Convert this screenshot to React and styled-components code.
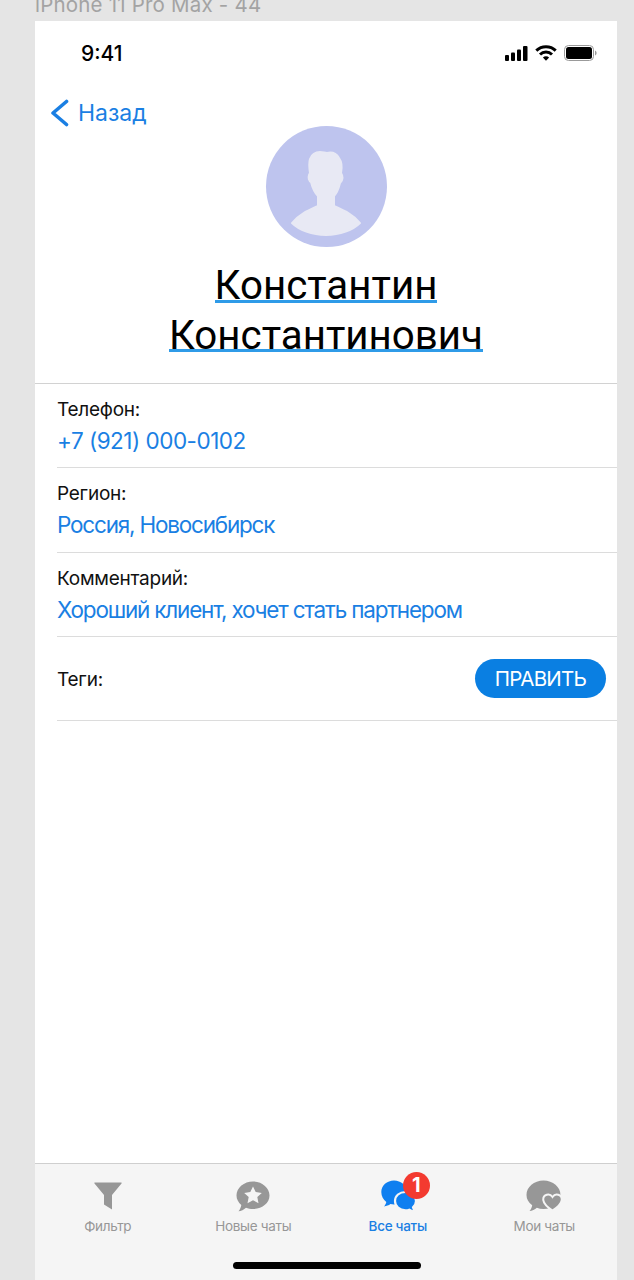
import React from "react";
import styled, { createGlobalStyle } from "styled-components";

const Global = createGlobalStyle`
  html, body { margin: 0; padding: 0; background: #e5e5e5; }
  body { font-family: Inter, "Liberation Sans", sans-serif; -webkit-font-smoothing: antialiased; }
`;
const Canvas = styled.div`
  width: 634px; height: 1280px; overflow: hidden; display: flex; flex-direction: column;
  padding-left: 35px; box-sizing: border-box; background: #e5e5e5;
`;
const Caption = styled.div`
  flex: none; height: 26px; margin-top: -5px; font-size: 20.5px; line-height: 20px;
  color: #a3a3a3; letter-spacing: 0.2px;
`;
const Frame = styled.div`
  width: 582px; flex: 1; min-height: 0; background: #fff; display: flex; flex-direction: column;
`;
const StatusBar = styled.div`
  height: 64px; flex: none; display: flex; align-items: center; justify-content: space-between;
  padding: 0 20px 0 46px; box-sizing: border-box;
`;
const Time = styled.span`
  font-size: 21px; font-weight: 500; color: #000; line-height: 1;
`;
const StatusIcons = styled.div`
  display: flex; align-items: center; gap: 7px;
`;
const NavBar = styled.div`
  height: 41px; flex: none; display: flex; align-items: center; gap: 8px; padding: 15px 0 0 15px;
  box-sizing: border-box; color: #1a7fe3;
`;
const BackLabel = styled.span`
  font-size: 23px; color: #1a7fe3;
`;
const Profile = styled.div`
  height: 258px; flex: none; display: flex; flex-direction: column; align-items: center;
  border-bottom: 1px solid #d2d2d2; box-sizing: border-box;
`;
const Avatar = styled.div`
  width: 121px; height: 121px; border-radius: 50%; background: #bec4ee; overflow: hidden; flex: none;
`;
const Name = styled.div`
  width: 360px; text-align: center; margin-top: 14px; font-family: Roboto, sans-serif;
  font-size: 40.3px; line-height: 49.5px; color: #000;
`;
const NameLine = styled.span`
  display: inline-block; position: relative; white-space: nowrap;
  &::after {
    content: ""; position: absolute; left: 0; right: 0; bottom: 8px; height: 3px; background: #2f9be8;
  }
`;
const Rows = styled.div`
  padding-left: 22px; display: flex; flex-direction: column;
`;
const Row = styled.div`
  height: 84.25px; border-bottom: 1px solid #dcdcdc; box-sizing: border-box; display: flex;
  flex-direction: ${p => (p.$inline ? "row" : "column")};
  align-items: ${p => (p.$inline ? "center" : "flex-start")};
  justify-content: ${p => (p.$inline ? "space-between" : "flex-start")};
  padding-top: ${p => (p.$inline ? "0" : "15px")};
  padding-right: ${p => (p.$inline ? "11px" : "0")};
`;
const Label = styled.div`
  font-size: 19px; line-height: 22px; color: #111; letter-spacing: -0.25px;
  padding-top: ${p => (p.$inline ? "3px" : "0")};
`;
const Value = styled.div`
  font-size: 22.5px; line-height: 28px; margin-top: 6px; color: #1a7fe3;
  letter-spacing: ${p => (p.$tight ? "-1.2px" : "-0.5px")};
`;
const EditButton = styled.button`
  width: 131px; height: 39px; border: 0; border-radius: 20px; background: #0a7fe2; color: #fff;
  font-family: inherit; font-size: 20.5px; letter-spacing: -0.7px; padding: 0;
`;
const Spacer = styled.div`flex: 1;`;
const TabBar = styled.div`
  height: 117px; flex: none; background: #f5f5f5; border-top: 1px solid #cfcfcf; box-sizing: border-box;
  display: flex; flex-direction: column;
`;
const Tabs = styled.div`
  display: grid; grid-template-columns: repeat(4, 1fr); padding-top: 14px;
`;
const Tab = styled.div`
  display: flex; flex-direction: column; align-items: center; color: ${p => (p.$active ? "#1a7fe3" : "#979797")};
`;
const IconBox = styled.div`
  height: 36px; width: 44px; position: relative; display: flex; align-items: center; justify-content: center;
`;
const TabLabel = styled.div`
  font-size: 13.5px; line-height: 16px; margin-top: 4px; font-weight: ${p => (p.$active ? 500 : 400)};
  letter-spacing: ${p => (p.$active ? "-0.3px" : "-0.3px")};
  margin-left: ${p => (p.$active ? "-2px" : "0")};
`;
const Badge = styled.div`
  position: absolute; left: 26px; top: -6px; width: 27px; height: 27px; border-radius: 50%;
  background: #f33a30; color: #fff; font-size: 20px; font-weight: 700; line-height: 27px; text-align: center;
`;
const HomeBar = styled.div`
  width: 188px; height: 7px; border-radius: 4px; background: #000; margin: 28px 0 0 198px;
`;

const Signal = () => (
  <svg width="23" height="15" viewBox="0 0 23 15" fill="#000">
    <rect x="0" y="9" width="4" height="6" rx="1" />
    <rect x="6" y="6.5" width="4" height="8.5" rx="1" />
    <rect x="12" y="3.5" width="4" height="11.5" rx="1" />
    <rect x="18" y="0" width="4.5" height="15" rx="1" />
  </svg>
);
const Wifi = () => (
  <svg width="22" height="16" viewBox="0 0 22 16" fill="none" stroke="#000" strokeWidth="3">
    <path d="M1.300 5.700a14 14 0 0 1 19.400 0" />
    <path d="M5 9.500a8.600 8.600 0 0 1 12 0" />
    <path d="M11 15.800 7.900 12.500a4.400 4.400 0 0 1 6.200 0Z" fill="#000" stroke="none" />
  </svg>
);
const Battery = () => (
  <svg width="33" height="16" viewBox="0 0 33 16">
    <rect x="0.500" y="0.500" width="29" height="15" rx="4" fill="none" stroke="#9a9a9a" />
    <rect x="2" y="2" width="26" height="12" rx="2.500" fill="#000" />
    <path d="M31 5.500c1 .4 1.600 1.400 1.600 2.500s-.6 2.100-1.600 2.500Z" fill="#9a9a9a" />
  </svg>
);
const Chevron = () => (
  <svg width="20" height="28" viewBox="0 0 20 28" fill="none" stroke="#1a7fe3" strokeWidth="3.600" strokeLinecap="round" strokeLinejoin="round">
    <path d="M16.500 2.500 3 14l13.500 11.500" />
  </svg>
);
const Person = () => (
  <svg width="121" height="121" viewBox="0 0 121 121" fill="#e8e9f4" stroke="#e8e9f4" strokeWidth="2" strokeLinejoin="round">
    <path d="M26 97C32 89 41 85 52 80V70C48 66 46 60 45 56C43 55 42 52 43 49L44 47C43 40 43 36 44 33C46 28 50 26 54 26C57 26 59 27 61 27C65 26 70 27 73 32C76 36 76 42 75 47C77 50 77 54 74 57C73 61 72 66 68 70V80C79 85 88 89 94 97C87 104 74 109 60 109C46 109 33 104 26 97Z" />
  </svg>
);
const Funnel = () => (
  <svg width="28" height="28" viewBox="0 0 28 28" fill="#979797">
    <path d="M1 .5h26c.6 0 .9.6.5 1.100L18 13v14.500L10 22.500V13L.5 1.600C.1 1.100.4.500 1 .5Z" />
  </svg>
);
const StarChat = () => (
  <svg width="34" height="31" viewBox="0 0 34 31">
    <path fill="#979797" d="M17 .5C26 .5 33.500 6.800 33.500 14.500S26 28 17 28c-2.500 0-5-.5-7-1.300-2 1.800-5 3.400-7.500 3.600 1.500-1.800 2.500-4 2.800-6.300C2.300 21.400.5 18.100.5 14.500.5 6.800 8 .5 17 .5Z" />
    <path fill="#f5f5f5" d="m17 5.500 2.700 5.600 6.100.8-4.500 4.200 1.200 6.100L17 19.200l-5.500 3 1.200-6.100-4.500-4.200 6.100-.8Z" />
  </svg>
);
const Chats = () => (
  <svg width="36" height="34" viewBox="0 -1 36 34">
    <path fill="#0f7ff0" d="M13 .5c7 0 13 5 13 11.500S20 24.500 13 24.500c-1.300 0-2.500-.2-3.600-.5-1.600 1.300-4 2.200-6.400 2.400 1.200-1.300 2-2.900 2.300-4.500C2.300 19.800.3 16.200.3 12 .3 5.500 6 .5 13 .5Z" />
    <path fill="#0f7ff0" stroke="#f5f5f5" strokeWidth="2.200" transform="translate(0 1.500)" d="M24.500 10.500c6 0 10.500 4 10.500 9 0 2.600-1.200 4.800-3 6.400.3 1.600 1.100 3 2.400 4.200-2.400 0-4.600-.6-6.200-1.900-1.200.4-2.400.6-3.700.6-6 0-10.500-4-10.500-9.300s4.500-9 10.500-9Z" />
  </svg>
);
const HeartChat = () => (
  <svg width="37" height="32" viewBox="0 0 37 32">
    <path fill="#979797" d="M17.500.5C27 .5 34.500 7 34.500 15c0 8.300-7.500 14-17 14-2.400 0-4.700-.4-6.700-1.200-1.800 1.700-4.800 3-7.300 3.300 1.500-1.800 2.400-3.800 2.700-5.800C2.400 22.500.5 19 .5 15 .5 7 8 .5 17.500.5Z" />
    <path fill="#979797" stroke="#f5f5f5" strokeWidth="2" transform="translate(-1 -.5)" d="M27.500 17.500c1.400-2 3.600-2.800 5.700-2.200 2.400.7 3.800 2.800 3.500 5.400-.4 3.800-4.400 7.300-9.200 10.500-4.800-3.200-8.700-6.700-9.200-10.500-.3-2.600 1.100-4.700 3.500-5.400 2.100-.6 4.300.2 5.700 2.200Z" />
  </svg>
);

export default function App() {
  return (
    <Canvas>
      <Global />
      <Caption>iPhone 11 Pro Max - 44</Caption>
      <Frame>
        <StatusBar>
          <Time>9:41</Time>
          <StatusIcons><Signal /><Wifi /><Battery /></StatusIcons>
        </StatusBar>
        <NavBar><Chevron /><BackLabel>Назад</BackLabel></NavBar>
        <Profile>
          <Avatar><Person /></Avatar>
          <Name>
            <NameLine>Константин</NameLine><br />
            <NameLine>Константинович</NameLine>
          </Name>
        </Profile>
        <Rows>
          <Row><Label>Телефон:</Label><Value>+7 (921) 000-0102</Value></Row>
          <Row><Label>Регион:</Label><Value $tight>Россия, Новосибирск</Value></Row>
          <Row><Label>Комментарий:</Label><Value $tight>Хороший клиент, хочет стать партнером</Value></Row>
          <Row $inline><Label $inline>Теги:</Label><EditButton>ПРАВИТЬ</EditButton></Row>
        </Rows>
        <Spacer />
        <TabBar>
          <Tabs>
            <Tab><IconBox><Funnel /></IconBox><TabLabel>Фильтр</TabLabel></Tab>
            <Tab><IconBox><StarChat /></IconBox><TabLabel>Новые чаты</TabLabel></Tab>
            <Tab $active><IconBox><Chats /><Badge>1</Badge></IconBox><TabLabel $active>Все чаты</TabLabel></Tab>
            <Tab><IconBox><HeartChat /></IconBox><TabLabel>Мои чаты</TabLabel></Tab>
          </Tabs>
          <HomeBar />
        </TabBar>
      </Frame>
    </Canvas>
  );
}
